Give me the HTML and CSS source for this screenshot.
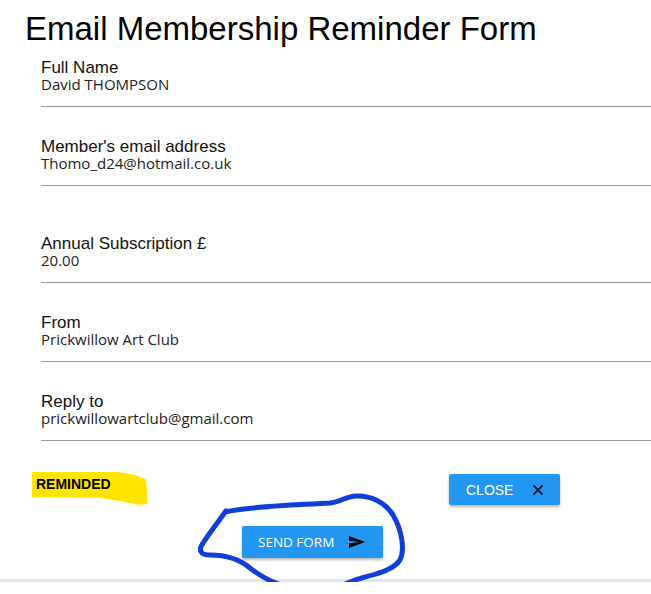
FILE: index.html
```html
<!DOCTYPE html>
<html lang="en">
<head>
<meta charset="utf-8">
<title>Email Membership Reminder Form</title>
<link rel="stylesheet" href="styles.css">
</head>
<body>
  <h1 class="title">Email Membership Reminder Form</h1>
  <div class="fields">
    <div class="field field-first">
      <div class="label">Full Name</div>
      <div class="value">David THOMPSON</div>
    </div>
    <div class="field">
      <div class="label">Member's email address</div>
      <div class="value">Thomo_d24@hotmail.co.uk</div>
    </div>
    <div class="field field-wide">
      <div class="label">Annual Subscription £</div>
      <div class="value">20.00</div>
    </div>
    <div class="field">
      <div class="label">From</div>
      <div class="value">Prickwillow Art Club</div>
    </div>
    <div class="field">
      <div class="label">Reply to</div>
      <div class="value">prickwillowartclub@gmail.com</div>
    </div>
  </div>

  <div class="actions">
    <div class="status-row">
      <svg class="highlight" viewBox="0 470 160 40" width="160" height="40" aria-hidden="true">
        <polygon points="33,473 118,473 135,476 145,480 146,490 146,503 140,504 120,500 100,497 33,496" fill="#ffe500" stroke="#ffe500" stroke-width="2" stroke-linejoin="round"/>
      </svg>
      <span class="status">REMINDED</span>
      <button class="btn btn-close" type="button">
        <span>CLOSE</span>
        <svg class="icon-x" viewBox="0 0 10 10" width="10" height="10" aria-hidden="true">
          <path d="M1 1L9 9M9 1L1 9" stroke="#101830" stroke-width="1.8" stroke-linecap="square"/>
        </svg>
      </button>
    </div>
    <div class="send-row">
      <button class="btn btn-send" type="button">
        <span>SEND FORM</span>
        <svg class="icon-send" viewBox="2 3 21 18" width="16" height="12" preserveAspectRatio="none" aria-hidden="true">
          <path d="M2.01 21L23 12 2.01 3 2 10l15 2-15 2z" fill="#000"/>
        </svg>
      </button>
      <svg class="scribble" viewBox="0 486 651 106" width="651" height="106" aria-hidden="true">
        <path d="M225,512 C250,506 300,505 330,503 C340,502 345,497 355,496 C370,495 385,502 393,515 C402,530 405,550 400,560 C392,572 370,575 355,580 C340,586 330,592 305,590 C285,588 265,580 250,568 C238,558 225,555 210,555 C200,555 198,550 203,543 C210,532 218,522 226,511" fill="none" stroke="#0f3fd8" stroke-width="5" stroke-linecap="round" stroke-linejoin="round"/>
      </svg>
    </div>
  </div>
  <div class="footer-line"></div>
</body>
</html>
```

FILE: styles.css
```css
html, body {
  margin: 0;
  padding: 0;
  background: #ffffff;
  overflow: hidden;
}

body {
  font-family: "Liberation Sans", Arial, sans-serif;
  color: #000;
}

.title {
  margin: 11px 0 0 25px;
  font-family: "Liberation Sans", Arial, sans-serif;
  font-weight: normal;
  font-size: 33px;
  line-height: 36px;
  color: #000;
}

.fields {
  margin-left: 41px;
  display: flex;
  flex-direction: column;
}

.field {
  padding: 31px 0 13px 0;
  border-bottom: 1px solid #9a9a9a;
}

.field-first {
  padding-top: 12px;
}

.field-wide {
  padding-top: 49px;
}

.label {
  font-family: "Liberation Sans", Arial, sans-serif;
  font-size: 17px;
  line-height: 17px;
  color: #111;
}

.value {
  font-family: "Open Sans", "Noto Sans", sans-serif;
  font-size: 15px;
  line-height: 17px;
  color: #222;
}

.actions {
  display: flex;
  flex-direction: column;
}

.status-row {
  position: relative;
  margin-top: 33px;
  display: flex;
  align-items: flex-start;
  padding-left: 36px;
}

.highlight {
  position: absolute;
  left: 0;
  top: -4px;
}

.status {
  position: relative;
  margin-top: 2px;
  font-family: "Liberation Sans", Arial, sans-serif;
  font-weight: bold;
  font-size: 14px;
  line-height: 16px;
  color: #000;
}

.btn {
  display: flex;
  align-items: center;
  border: none;
  border-radius: 2px;
  background: #2196f3;
  color: #fff;
  box-shadow: 0 2px 3px rgba(0, 0, 0, 0.28);
  cursor: pointer;
  box-sizing: border-box;
}

.btn-close {
  margin-left: auto;
  margin-right: 91px;
  width: 111px;
  height: 31px;
  padding: 0 0 0 17px;
  gap: 20px;
  font-family: "Liberation Sans", Arial, sans-serif;
  font-size: 14px;
}

.btn-send {
  width: 141px;
  height: 32px;
  padding: 0 0 0 16px;
  gap: 15px;
  font-family: "Open Sans", "Noto Sans", sans-serif;
  font-size: 13.5px;
}

.send-row {
  position: relative;
  margin-top: 21px;
  padding-left: 242px;
  display: flex;
}

.scribble {
  position: absolute;
  left: 0;
  top: -40px;
  pointer-events: none;
}

.footer-line {
  margin-top: 21px;
  height: 3px;
  background: #dce6f0;
}
```
